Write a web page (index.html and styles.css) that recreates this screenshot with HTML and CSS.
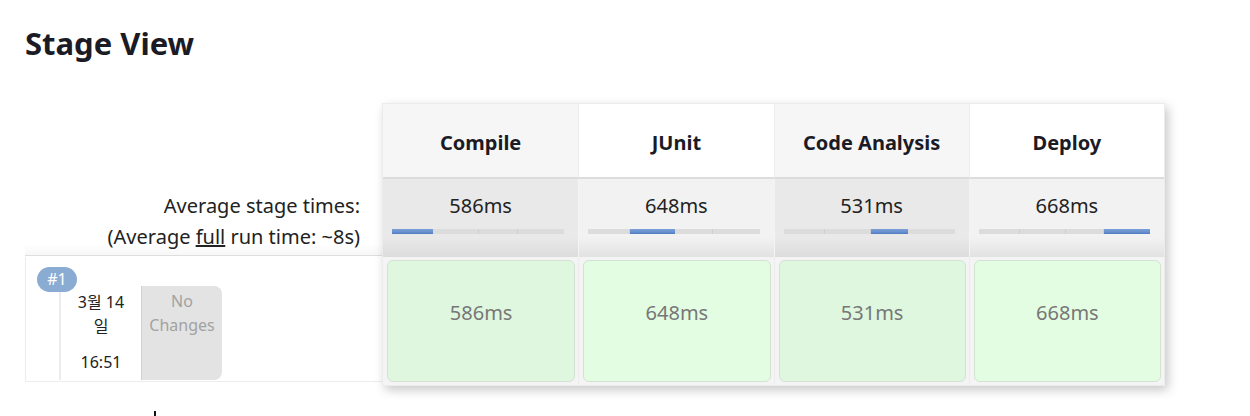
FILE: index.html
```html
<!DOCTYPE html>
<html>
<head>
<meta charset="utf-8">
<link rel="stylesheet" href="styles.css">
</head>
<body>
<h1 class="title">Stage View</h1>
<div class="stage-view">
  <div class="side">
    <div class="side-head"></div>
    <div class="side-avg">
      <div>Average stage times:</div>
      <div>(Average <u>full</u> run time: ~8s)</div>
    </div>
    <div class="side-build">
      <div class="badge">#1</div>
      <div class="build-info">
        <div class="date-cell">
          <div class="date">3월 14<br>일</div>
          <div class="time">16:51</div>
        </div>
        <div class="changes">No<br>Changes</div>
      </div>
    </div>
  </div>
  <div class="table">
    <div class="hd odd">Compile</div>
    <div class="hd even">JUnit</div>
    <div class="hd odd">Code Analysis</div>
    <div class="hd even">Deploy</div>

    <div class="avg odd"><div class="ms">586ms</div><div class="bar"><span class="seg s1 on"></span><span class="seg s2"></span><span class="seg s3"></span><span class="seg s4"></span></div></div>
    <div class="avg even"><div class="ms">648ms</div><div class="bar"><span class="seg s1"></span><span class="seg s2 on"></span><span class="seg s3"></span><span class="seg s4"></span></div></div>
    <div class="avg odd"><div class="ms">531ms</div><div class="bar"><span class="seg s1"></span><span class="seg s2"></span><span class="seg s3 on"></span><span class="seg s4"></span></div></div>
    <div class="avg even"><div class="ms">668ms</div><div class="bar"><span class="seg s1"></span><span class="seg s2"></span><span class="seg s3"></span><span class="seg s4 on"></span></div></div>

    <div class="cell odd"><div class="box">586ms</div></div>
    <div class="cell even"><div class="box">648ms</div></div>
    <div class="cell odd"><div class="box">531ms</div></div>
    <div class="cell even"><div class="box">668ms</div></div>
  </div>
</div>
<div class="tick"></div>
</body>
</html>
```
FILE: styles.css
```css
html, body {
  margin: 0;
  padding: 0;
  background: #fff;
}
body {
  font-family: "Noto Sans", "Noto Sans CJK KR", sans-serif;
  color: #1a1a24;
  padding: 0 25px;
}
.title {
  margin: 0;
  padding-top: 22px;
  height: 103px;
  box-sizing: border-box;
  font-size: 31px;
  line-height: 42px;
  font-weight: 700;
  color: #1b1b26;
}
.stage-view {
  display: flex;
  align-items: flex-start;
}
.side {
  width: 357px;
  display: flex;
  flex-direction: column;
}
.side-head {
  height: 75px;
}
.side-avg {
  height: 78px;
  box-sizing: border-box;
  padding: 12px 22px 0 0;
  text-align: right;
  font-size: 20px;
  line-height: 31px;
  color: #222;
  border-bottom: 1px solid #dedede;
  background: linear-gradient(to bottom, #fff 85%, #f7f7f7 100%);
}
.side-build {
  height: 125px;
  box-sizing: border-box;
  border: 1px solid #ececec;
  border-top: none;
  border-right: none;
  margin-top: 1px;
  padding: 10px 0 0 11px;
  display: flex;
  flex-direction: column;
  align-items: flex-start;
}
.badge {
  width: 40px;
  height: 25px;
  border-radius: 13px;
  background: #8aabd2;
  color: #fff;
  font-size: 16px;
  line-height: 25px;
  text-align: center;
  margin-bottom: -6px;
  position: relative;
  z-index: 1;
}
.build-info {
  display: flex;
  margin-left: 22px;
  height: 94px;
}
.date-cell {
  width: 82px;
  background: #fff;
  border-left: 2px solid #ececec;
  text-align: center;
  font-size: 16px;
  line-height: 24px;
  color: #222;
  padding-top: 4px;
  box-sizing: border-box;
}
.time {
  margin-top: 12px;
}
.changes {
  width: 81px;
  background: #e3e3e3;
  border-left: 1px solid #d0d0d0;
  border-radius: 0 8px 8px 0;
  text-align: center;
  font-size: 16px;
  line-height: 24px;
  color: #a2a2a2;
  padding-top: 3px;
  box-sizing: border-box;
}
.table {
  width: 781px;
  display: grid;
  grid-template-columns: repeat(4, 1fr);
  grid-template-rows: 75px 78px 128px;
  border: 1px solid #ececec;
  box-shadow: 3px 4px 10px rgba(0, 0, 0, 0.22);
  background: #fff;
}
.hd {
  display: flex;
  align-items: center;
  justify-content: center;
  font-size: 20px;
  font-weight: 700;
  color: #1b1b26;
  border-left: 1px solid #ececec;
  border-bottom: 2px solid #dcdcdc;
  padding-top: 3px;
}
.hd:first-child {
  border-left: none;
}
.hd.odd { background: #f6f6f6; }
.hd.even { background: #fff; }
.avg {
  border-left: 1px solid #f4f4f4;
  padding-top: 13px;
  text-align: center;
}
.avg.odd { background: linear-gradient(to bottom, #e9e9e9 75%, #dcdcdc 100%); }
.avg.even { background: linear-gradient(to bottom, #f2f2f2 75%, #e2e2e2 100%); }
.avg:nth-child(5) { border-left: none; }
.ms {
  font-size: 20px;
  line-height: 28px;
  color: #222;
}
.bar {
  display: flex;
  height: 5px;
  margin: 9px 14px 0 9px;
}
.seg {
  height: 5px;
  background: #dcdcdc;
  border-right: 1px solid #cfcfcf;
  box-sizing: border-box;
}
.seg:last-child { border-right: none; }
.seg.s1 { flex: 586; }
.seg.s2 { flex: 648; }
.seg.s3 { flex: 531; }
.seg.s4 { flex: 668; }
.seg.on {
  background: linear-gradient(to bottom, #7ca0d8 0%, #6790cf 60%, #4f7ac0 100%);
  border-right: none;
}
.cell {
  padding: 3px 3px 3px 4px;
  border-left: 1px solid #ececec;
  background: #f4f4f4;
}
.cell:nth-child(9) { border-left: none; }
.box {
  height: 100%;
  box-sizing: border-box;
  border: 1px solid #d4e2d4;
  border-radius: 6px;
  text-align: center;
  padding-top: 39px;
  font-size: 20px;
  line-height: 26px;
  color: #777;
}
.cell.odd .box { background: #dff7df; }
.cell.even .box { background: #e3fde3; }
.tick {
  width: 2px;
  height: 7px;
  background: #111;
  margin: 25px 0 0 129px;
}
```
